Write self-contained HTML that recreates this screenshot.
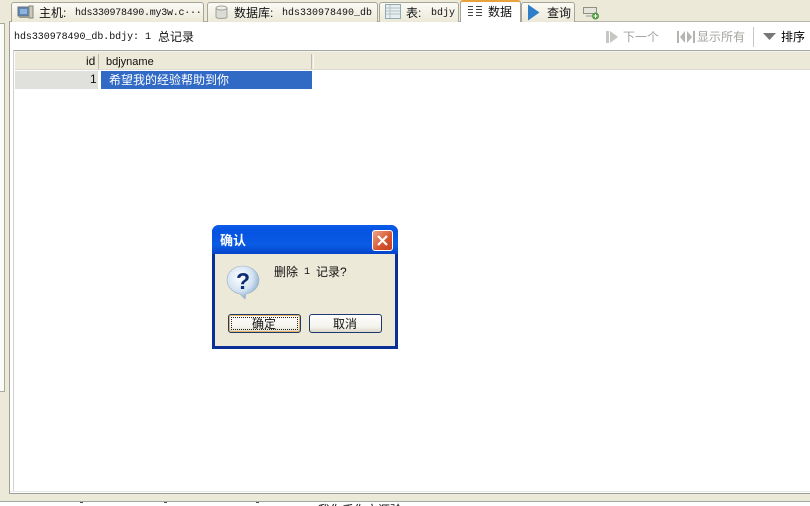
<!DOCTYPE html>
<html><head><meta charset="utf-8"><style>
*{box-sizing:border-box}
html,body{margin:0;padding:0}
body{width:810px;height:506px;overflow:hidden;background:#ece9d8;position:relative;font-family:"Liberation Sans","WenQuanYi Zen Hei","Noto Sans CJK SC",sans-serif;font-size:12px;color:#111}
.a{position:absolute;white-space:nowrap}
.m{font-family:"Liberation Mono","WenQuanYi Zen Hei","Noto Sans CJK SC",monospace;font-size:10px;color:#111}
.z{font-family:"Liberation Sans","WenQuanYi Zen Hei","Noto Sans CJK SC",sans-serif;font-size:12px}
.tab{position:absolute;top:2px;height:20px;background:linear-gradient(#fbfaf5,#ece9d8);border:1px solid #a5a598;border-bottom:none;border-radius:3px 3px 0 0}
</style></head><body>
<div class="a" style="left:0;top:23px;width:5px;height:369px;background:#fbfbf8;border:1px solid #a9a9a2;border-left:none"></div>
<div class="a" style="left:9px;top:21px;width:801px;height:473px;background:#fff;border:1px solid #9aa09a;border-right:none;border-top-color:#b5b5aa"></div>
<div class="a" style="left:10px;top:491px;width:800px;height:1px;background:#e8e8e4"></div>

<div class="tab" style="left:11px;width:193px"></div>
<svg class="a" style="left:17px;top:5px" width="17" height="15" viewBox="0 0 17 15"><rect x="1" y="2" width="11" height="9" fill="#5e86b5" stroke="#66737f"/><rect x="3" y="4" width="7" height="5" fill="#8cb4dd"/><rect x="12" y="1" width="4" height="12" fill="#c9c9bd" stroke="#858578"/><rect x="2" y="11" width="10" height="2" fill="#9b9b90"/></svg>
<div class="a z" style="left:39px;top:4px">主机:</div>
<div class="a m" style="left:75px;top:8px;letter-spacing:-.25px">hds330978490.my3w.c···</div>

<div class="tab" style="left:207px;width:171px"></div>
<svg class="a" style="left:214px;top:5px" width="15" height="15" viewBox="0 0 15 15"><path d="M2 3v9c0 2 11 2 11 0V3" fill="#dcdcd6" stroke="#a0a098"/><ellipse cx="7.500" cy="3" rx="5.500" ry="2" fill="#efefea" stroke="#a0a098"/></svg>
<div class="a z" style="left:234px;top:4px">数据库:</div>
<div class="a m" style="left:282px;top:8px">hds330978490_db</div>

<div class="tab" style="left:379px;width:80px"></div>
<svg class="a" style="left:385px;top:4px" width="16" height="15" viewBox="0 0 16 15"><rect x=".5" y=".5" width="15" height="14" fill="#e9eef0" stroke="#90a8b0"/><path d="M1 4h14M1 7h14M1 10h14M5 1v13" stroke="#aec2c6"/></svg>
<div class="a z" style="left:406px;top:4px">表:</div>
<div class="a m" style="left:431px;top:8px">bdjy</div>

<div class="a" style="left:460px;top:0;width:61px;height:22px;background:#fff;border:1px solid #a5a598;border-top:2px solid #e8a33c;border-bottom:none;border-radius:3px 3px 0 0"></div>
<svg class="a" style="left:468px;top:5px" width="14" height="12" viewBox="0 0 14 12"><path d="M0 1.500h5M0 4.500h5M0 7.500h5M0 10.500h5M8 1.500h6M8 4.500h6M8 7.500h6M8 10.500h6" stroke="#444"/></svg>
<div class="a z" style="left:488px;top:3px">数据</div>

<div class="tab" style="left:521px;width:54px"></div>
<svg class="a" style="left:527px;top:4px" width="13" height="17" viewBox="0 0 13 17"><path d="M1 .5L12.500 8.500L1 16.500Z" fill="#2e7fc8"/></svg>
<div class="a z" style="left:547px;top:4px">查询</div>
<svg class="a" style="left:583px;top:6px" width="17" height="14" viewBox="0 0 17 14"><rect x=".5" y="1.500" width="13" height="6" fill="#e4e4dc" stroke="#8f8f85"/><path d="M3 10h6" stroke="#999"/><circle cx="12.500" cy="10" r="3.500" fill="#4c9a3c"/><path d="M10.500 10h4M12.500 8v4" stroke="#fff"/></svg>

<div class="a m" style="left:14px;top:32px;letter-spacing:-.05px">hds330978490_db.bdjy:</div>
<div class="a m" style="left:145px;top:32px">1</div>
<div class="a z" style="left:158px;top:28px">总记录</div>

<svg class="a" style="left:605px;top:30px" width="14" height="14" viewBox="0 0 14 14"><path d="M1 1h3v12H1zM5 1l8 6-8 6z" fill="#c6c6c2"/></svg>
<div class="a z" style="left:623px;top:28px;color:#a4a4a0">下一个</div>
<svg class="a" style="left:677px;top:31px" width="18" height="12" viewBox="0 0 18 12"><path d="M0 0h2v12H0zM8 0L3 6l5 6zM10 0l5 6-5 6zM16 0h2v12h-2z" fill="#b4b4b0"/></svg>
<div class="a z" style="left:697px;top:28px;color:#a4a4a0">显示所有</div>
<div class="a" style="left:753px;top:27px;width:1px;height:20px;background:#c8c8c2"></div>
<svg class="a" style="left:763px;top:33px" width="13" height="7" viewBox="0 0 13 7"><path d="M0 0h13L6.500 7z" fill="#777"/></svg>
<div class="a z" style="left:781px;top:28px;color:#000">排序</div>

<div class="a" style="left:13px;top:50px;width:797px;height:1px;background:#a5a8a4"></div>
<div class="a" style="left:13px;top:51px;width:797px;height:1px;background:#f4f4ef"></div>
<div class="a" style="left:15px;top:52px;width:795px;height:18px;background:#ece9d8"></div>
<div class="a" style="left:15px;top:69px;width:795px;height:1px;background:#dcdad0"></div>
<div class="a" style="left:98px;top:54px;width:1px;height:15px;background:#bdbbae"></div>
<div class="a" style="left:311px;top:54px;width:1px;height:15px;background:#bdbbae"></div>
<div class="a" style="left:313px;top:54px;width:1px;height:15px;background:#f8f8f4"></div>
<div class="a" style="left:13px;top:50px;width:1px;height:441px;background:#d0d0cc"></div>
<div class="a" style="left:86px;top:54px;font-size:12px">id</div>
<div class="a" style="left:106px;top:56px;font-size:11px">bdjyname</div>
<div class="a" style="left:15px;top:71px;width:83px;height:18px;background:#e0e0dc"></div>
<div class="a" style="left:90px;top:72px">1</div>
<div class="a" style="left:101px;top:71px;width:211px;height:18px;background:#316ac5"></div>
<div class="a z" style="left:109px;top:71px;color:#fff">希望我的经验帮助到你</div>

<div class="a" style="left:212px;top:225px;width:186px;height:124px;background:#0c2f96;border-radius:7px 7px 0 0"></div>
<div class="a" style="left:212px;top:225px;width:186px;height:29px;background:linear-gradient(#0a5de8,#0553e2 20%,#0a5be4 70%,#0643c8);border-radius:7px 7px 0 0"></div>
<div class="a" style="left:215px;top:254px;width:180px;height:92px;background:#ece9d8"></div>
<div class="a" style="left:220px;top:230px;color:#fff;font-size:13px;font-weight:bold;font-family:'WenQuanYi Zen Hei','Noto Sans CJK SC',sans-serif">确认</div>
<div class="a" style="left:372px;top:230px;width:21px;height:21px;background:linear-gradient(135deg,#eda38a,#d6532e 60%,#c5401e);border:1px solid #fff;border-radius:3px"></div>
<svg class="a" style="left:372px;top:230px" width="21" height="21" viewBox="0 0 21 21"><path d="M6 6l9 9M15 6l-9 9" stroke="#fff" stroke-width="2.200"/></svg>

<svg class="a" style="left:226px;top:264px" width="34" height="36" viewBox="0 0 34 36"><defs><radialGradient id="q" cx=".4" cy=".35" r=".75"><stop offset="0" stop-color="#fff"/><stop offset=".55" stop-color="#d3e3f2"/><stop offset="1" stop-color="#6f97bf"/></radialGradient></defs><path d="M17 2C8 2 1 8 1 16s7 13 13 14l5 5 1-5c7-1 13-7 13-14S26 2 17 2z" fill="url(#q)" stroke="#9db1c4" stroke-width=".6"/><text x="17" y="25" text-anchor="middle" font-family="Liberation Sans,sans-serif" font-weight="bold" font-size="23" fill="#0d2c74">?</text></svg>

<div class="a z" style="left:274px;top:263px">删除</div>
<div class="a m" style="left:304px;top:267px">1</div>
<div class="a z" style="left:316px;top:263px">记录?</div>

<div class="a" style="left:228px;top:314px;width:73px;height:19px;background:linear-gradient(#fff,#f4f3ec 70%,#dcd8c8);border:1px solid #1c3a6e;border-radius:3px;box-shadow:inset 0 0 0 1px #e5b060"></div>
<div class="a" style="left:231px;top:317px;width:67px;height:13px;border:1px dotted #222"></div>
<div class="a z" style="left:252px;top:315px">确定</div>
<div class="a" style="left:309px;top:314px;width:73px;height:19px;background:linear-gradient(#fff,#f4f3ec 70%,#dcd8c8);border:1px solid #1c3a6e;border-radius:3px"></div>
<div class="a z" style="left:333px;top:315px">取消</div>

<div class="a" style="left:0;top:501px;width:810px;height:1px;background:#a0aaa4"></div>
<div class="a" style="left:0;top:502px;width:810px;height:4px;background:#fff;overflow:hidden">
<div class="a z" style="left:318px;top:-1px;font-size:12px">我你乎你文源验</div>
<div class="a" style="left:80px;top:0;width:3px;height:1px;background:#555"></div>
<div class="a" style="left:164px;top:0;width:3px;height:1px;background:#555"></div>
<div class="a" style="left:256px;top:0;width:3px;height:1px;background:#555"></div>
</div>
</body></html>
